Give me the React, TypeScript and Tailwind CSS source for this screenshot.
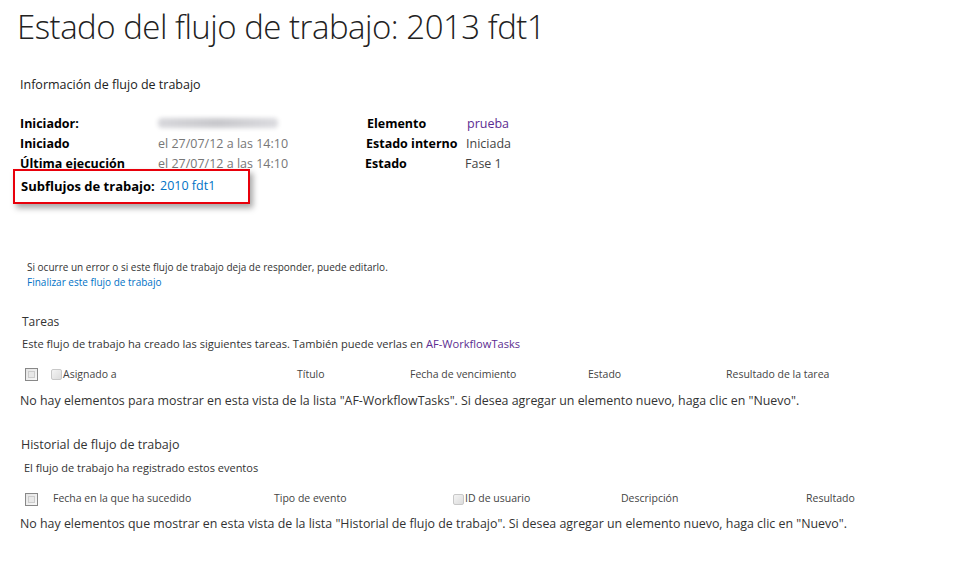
export default function App() {
  return (
    <div className="min-h-[569px] w-[961px] bg-white font-['Open_Sans',_'Noto_Sans',_sans-serif] text-[#333]">
      {/* Title */}
      <h1 className="pl-[17px] pt-[2px] text-[33px] font-light leading-[50px] tracking-[-0.5px] text-[#222]">
        Estado del flujo de trabajo: 2013 fdt1
      </h1>

      {/* Workflow info */}
      <div className="mt-[24px] pl-[20px] text-[12.5px] text-[#222]">Información de flujo de trabajo</div>

      <div className="mt-[20px] flex">
        <div className="flex w-[345px] flex-col">
          <InfoRow label="Iniciador:">
            <span className="inline-block h-[10px] w-[120px] rounded-sm bg-gradient-to-r from-[#d8d8dc] via-[#c8c8cc] to-[#dcdce0] blur-[2px]" />
          </InfoRow>
          <InfoRow label="Iniciado">el 27/07/12 a las 14:10</InfoRow>
          <InfoRow label="Última ejecución">el 27/07/12 a las 14:10</InfoRow>
          <div className="ml-[13px] mt-[-6px] flex h-[35px] w-[237px] items-center border-2 border-[#e8000b] pl-[6px] shadow-[3px_4px_6px_rgba(0,0,0,0.35)]">
            <span className="w-[139px] text-[13px] font-bold text-black">Subflujos de trabajo:</span>
            <span className="text-[12.5px] text-[#0072c6]">2010 fdt1</span>
          </div>
        </div>
        <div className="flex flex-col">
          <RightRow label="Elemento" offset="ml-[22px]">
            <span className="text-[#5c2d91]">prueba</span>
          </RightRow>
          <RightRow label="Estado interno" offset="ml-[21px]">
            Iniciada
          </RightRow>
          <RightRow label="Estado" offset="ml-[20px]">
            Fase 1
          </RightRow>
        </div>
      </div>

      {/* Error notice */}
      <div className="mt-[56px] pl-[27px] text-[10px] leading-[15px]">
        <div className="text-[#333]">Si ocurre un error o si este flujo de trabajo deja de responder, puede editarlo.</div>
        <div className="text-[#0072c6]">Finalizar este flujo de trabajo</div>
      </div>

      {/* Tasks */}
      <div className="mt-[23px] pl-[22px] text-[12px] text-[#333]">Tareas</div>
      <div className="mt-[5px] pl-[22px] text-[11.1px] text-[#333]">
        Este flujo de trabajo ha creado las siguientes tareas. También puede verlas en{" "}
        <span className="text-[#5c2d91]">AF-WorkflowTasks</span>
      </div>
      <div className="mt-[13px] flex h-[18px] items-center text-[10.5px] text-[#444]">
        <Checkbox className="ml-[25px]" />
        <span className="ml-[13px] flex w-[246px] items-center">
          <SmallBox />
          Asignado a
        </span>
        <span className="w-[113px]">Título</span>
        <span className="w-[178px]">Fecha de vencimiento</span>
        <span className="w-[138px]">Estado</span>
        <span>Resultado de la tarea</span>
      </div>
      <div className="mt-[9px] pl-[20px] text-[12.4px] text-[#333]">
        No hay elementos para mostrar en esta vista de la lista "AF-WorkflowTasks". Si desea agregar un elemento nuevo, haga clic en "Nuevo".
      </div>

      {/* History */}
      <div className="mt-[25px] pl-[21px] text-[12.5px] text-[#333]">Historial de flujo de trabajo</div>
      <div className="mt-[5px] pl-[24px] text-[11px] text-[#333]">El flujo de trabajo ha registrado estos eventos</div>
      <div className="mt-[14px] flex h-[18px] items-center text-[10.5px] text-[#444]">
        <Checkbox className="ml-[25px]" />
        <span className="ml-[15px] w-[221px]">Fecha en la que ha sucedido</span>
        <span className="w-[179px]">Tipo de evento</span>
        <span className="flex w-[168px] items-center">
          <SmallBox />
          ID de usuario
        </span>
        <span className="w-[185px]">Descripción</span>
        <span>Resultado</span>
      </div>
      <div className="mt-[7px] pl-[20px] text-[12.4px] text-[#333]">
        No hay elementos que mostrar en esta vista de la lista "Historial de flujo de trabajo". Si desea agregar un elemento nuevo, haga clic en "Nuevo".
      </div>
    </div>
  );
}

function InfoRow({ label, children }: { label: string; children: React.ReactNode }) {
  return (
    <div className="flex h-[20px] items-center pl-[20px]">
      <span className="w-[138px] text-[12.5px] font-bold text-black">{label}</span>
      <span className="text-[12.5px] text-[#777]">{children}</span>
    </div>
  );
}

function RightRow({ label, offset, children }: { label: string; offset: string; children: React.ReactNode }) {
  return (
    <div className="flex h-[20px] items-center">
      <span className={`${offset} w-[100px] text-[12.5px] font-bold text-black`}>{label}</span>
      <span className="text-[12.5px] text-[#444]">{children}</span>
    </div>
  );
}

function Checkbox({ className }: { className?: string }) {
  return (
    <span className={`${className} inline-block h-[13px] w-[13px] border border-[#888] bg-gradient-to-br from-[#e4e4e4] to-[#f8f8f8] p-[2px]`}>
      <span className="block h-full w-full border border-[#ccc] bg-[#e8e8e8]" />
    </span>
  );
}

function SmallBox() {
  return <span className="mr-[1px] inline-block h-[11px] w-[11px] rounded-[2px] border border-[#c8c8c8] bg-gradient-to-br from-[#f4f4f4] to-[#dcdcdc]" />;
}
